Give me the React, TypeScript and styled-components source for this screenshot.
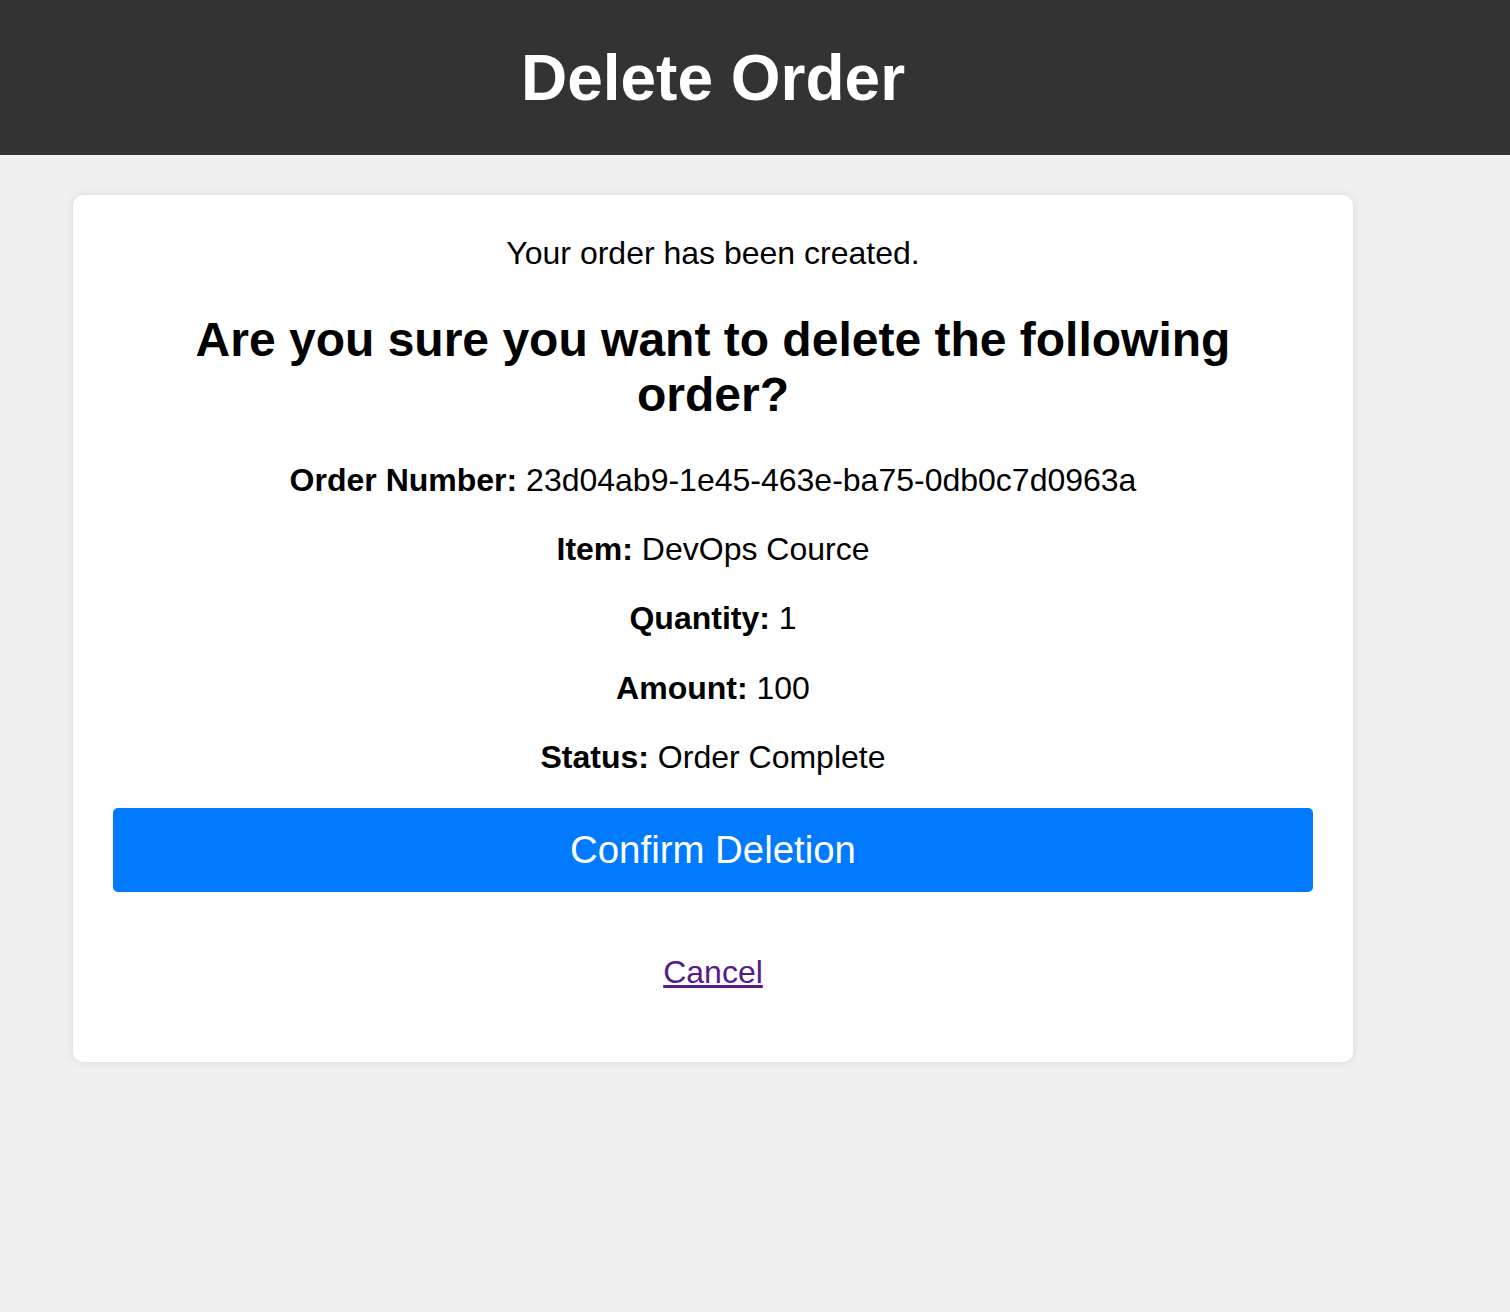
import React from "react";
import styled, { createGlobalStyle } from "styled-components";

const GlobalStyle = createGlobalStyle`
  html, body {
    margin: 0;
    padding: 0;
    background: #f0f0f0;
    font-family: "Liberation Sans", Arial, sans-serif;
    color: #000;
  }
`;

const Header = styled.header`
  background: #333;
  color: #fff;
  padding: 41px 73px 40px;
`;

const Title = styled.h1`
  width: 1280px;
  margin: 0;
  font-size: 64px;
  line-height: 74px;
  font-weight: bold;
  text-align: center;
`;

const Main = styled.main`
  padding: 40px 73px;
`;

const Card = styled.section`
  width: 1280px;
  box-sizing: border-box;
  background: #fff;
  border-radius: 10px;
  box-shadow: 0 0 10px rgba(0, 0, 0, 0.1);
  padding: 40px;
  text-align: center;
`;

const Message = styled.div`
  font-size: 32px;
  line-height: 36.8px;
`;

const Question = styled.h2`
  font-size: 48px;
  line-height: 55.2px;
  margin: 39.8px 0;
  font-weight: bold;
`;

const Detail = styled.p`
  font-size: 32px;
  line-height: 37.3px;
  margin: 32px 0;
`;

const Label = styled.strong`
  font-weight: bold;
`;

const ConfirmButton = styled.button`
  display: block;
  width: 100%;
  margin-top: 32px;
  padding: 20px;
  border: none;
  border-radius: 5px;
  background: #007bff;
  color: #fff;
  font-family: "Liberation Sans", Arial, sans-serif;
  font-size: 38.4px;
  line-height: 44px;
  cursor: pointer;
`;

const CancelRow = styled.p`
  font-size: 32px;
  line-height: 36.8px;
  margin: 62px 0 31px;
`;

const CancelLink = styled.a`
  color: #551a8b;
  text-decoration: underline;
`;

const details: [string, string][] = [
  ["Order Number", "23d04ab9-1e45-463e-ba75-0db0c7d0963a"],
  ["Item", "DevOps Cource"],
  ["Quantity", "1"],
  ["Amount", "100"],
  ["Status", "Order Complete"],
];

export default function App() {
  return (
    <>
      <GlobalStyle />
      <Header>
        <Title>Delete Order</Title>
      </Header>
      <Main>
        <Card>
          <Message>Your order has been created.</Message>
          <Question>Are you sure you want to delete the following order?</Question>
          {details.map(([label, value]) => (
            <Detail key={label}>
              <Label>{label}:</Label> {value}
            </Detail>
          ))}
          <ConfirmButton type="button">Confirm Deletion</ConfirmButton>
          <CancelRow>
            <CancelLink href="#cancel">Cancel</CancelLink>
          </CancelRow>
        </Card>
      </Main>
    </>
  );
}
